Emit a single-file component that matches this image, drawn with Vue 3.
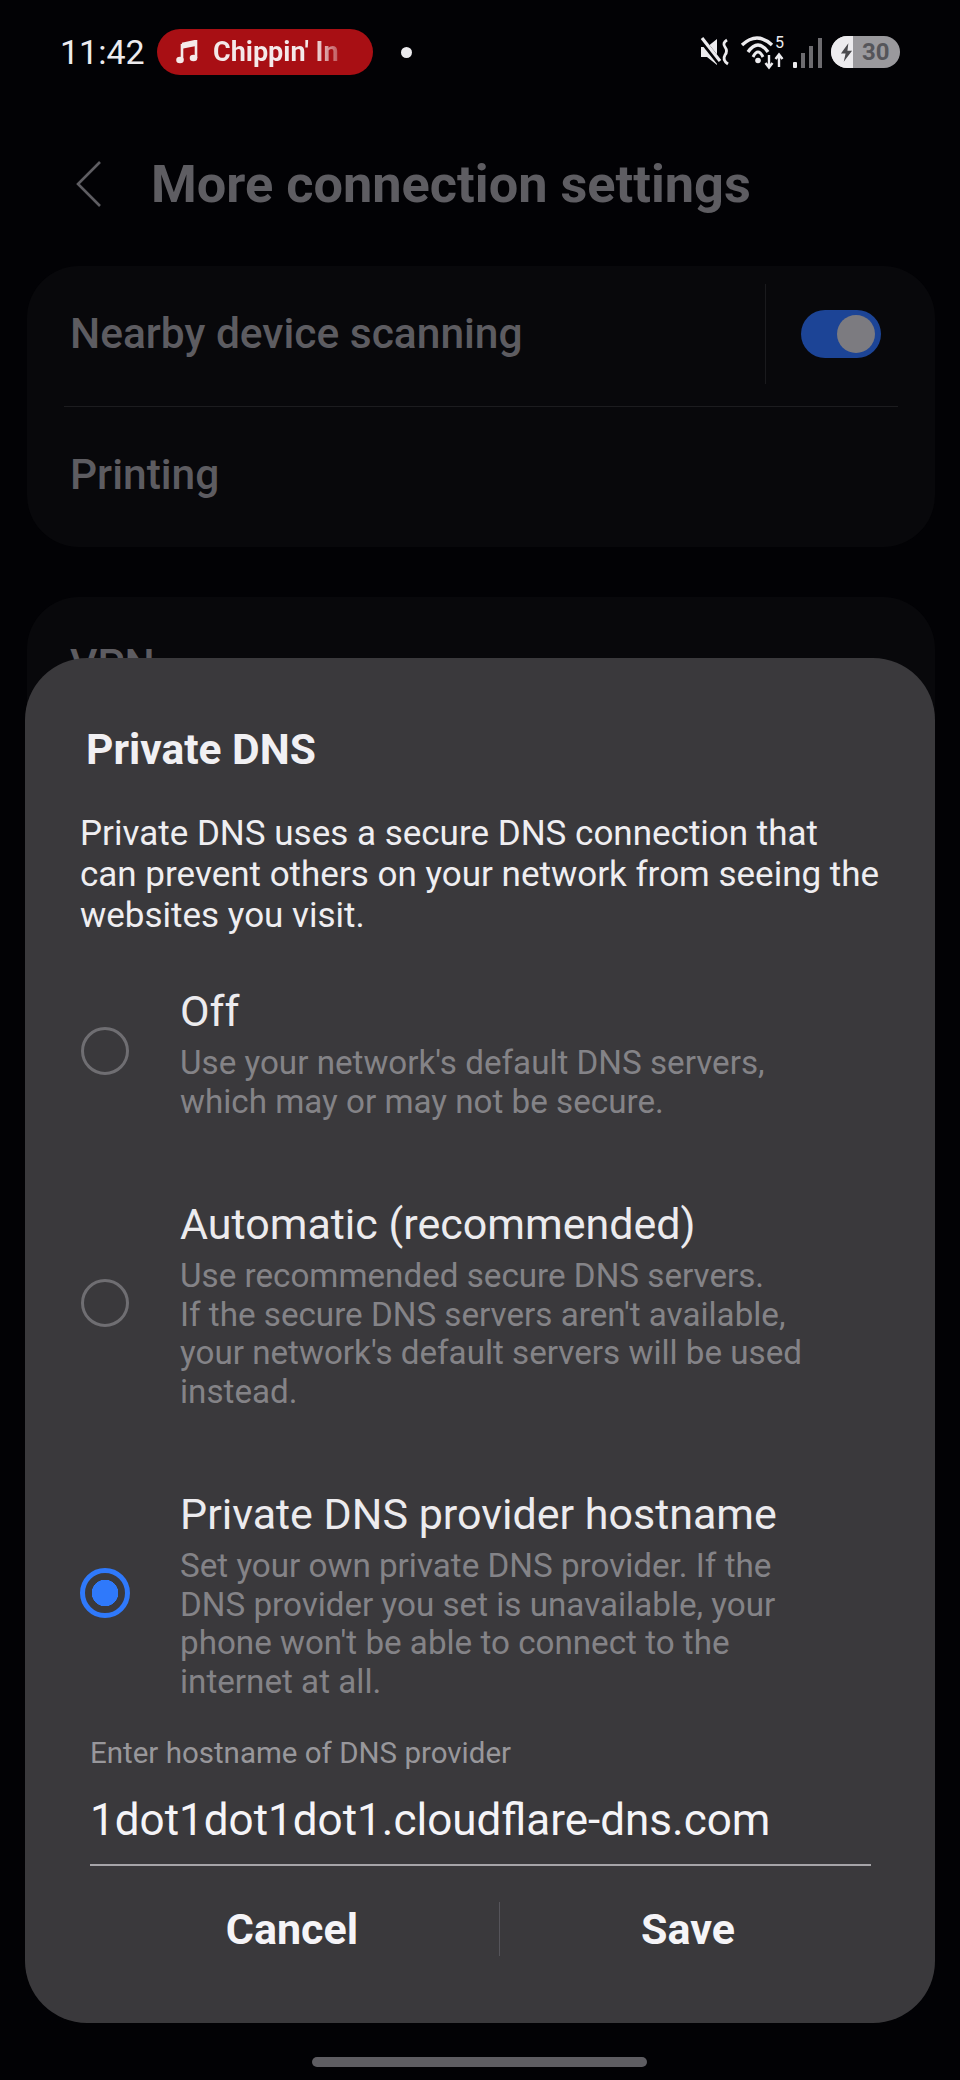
<template>
  <div class="screen">
    <div class="status-bar">
      <span class="time">11:42</span>
      <div class="now-playing">
        <svg class="note" viewBox="0 0 22 24" width="22" height="24">
          <path d="M6 4 L20 1 V18" fill="none" stroke="#f4e9e9" stroke-width="2.6" />
          <path d="M6 4 V20" fill="none" stroke="#f4e9e9" stroke-width="2.6" />
          <path d="M6 3.5 L20 .8 V6 L6 8.8 Z" fill="#f4e9e9" />
          <ellipse cx="4" cy="20" rx="3.8" ry="3.2" fill="#f4e9e9" />
          <ellipse cx="17.5" cy="18" rx="3.8" ry="3.2" fill="#f4e9e9" />
        </svg>
        <span class="track">Chippin' In</span>
      </div>
      <span class="dot"></span>
      <div class="status-icons">
        <svg viewBox="0 0 32 30" width="32" height="30">
          <path d="M1 10 H7 L17 2 V28 L7 20 H1 Z" fill="#ecebee" />
          <path d="M1 2 L20 26" stroke="#020205" stroke-width="6" />
          <path d="M2 1 L20 24" stroke="#ecebee" stroke-width="3.200" />
          <path d="M27 3 Q22 6 25 10 Q28 14 25 18 Q22 23 28 27" fill="none" stroke="#ecebee" stroke-width="2.800" />
        </svg>
        <svg class="wifi" viewBox="0 0 46 34" width="46" height="34">
          <path d="M2 10 Q17 -4 32 10" fill="none" stroke="#ecebee" stroke-width="3.400" />
          <path d="M8 17 Q18 3 28 17" fill="none" stroke="#ecebee" stroke-width="3.400" />
          <path d="M13 22 Q18 12 23 22" fill="none" stroke="#ecebee" stroke-width="3" />
          <circle cx="18" cy="25.500" r="2.800" fill="#ecebee" />
          <text x="35" y="13" class="wifi-num">5</text>
          <path d="M29 20 V32 M25.500 28 L29 32.500 L32.500 28" fill="none" stroke="#ecebee" stroke-width="2.400" />
          <path d="M39 32 V20 M35.500 24 L39 19.500 L42.500 24" fill="none" stroke="#ecebee" stroke-width="2.400" />
        </svg>
        <svg class="signal" viewBox="0 0 29 30" width="29" height="30">
          <rect x="0" y="24" width="4" height="6" rx="1" fill="#ecebee" />
          <rect x="8" y="15" width="4" height="15" fill="#6d6c70" />
          <rect x="16" y="8" width="4" height="22" fill="#6d6c70" />
          <rect x="25" y="0" width="4" height="30" fill="#6d6c70" />
        </svg>
        <div class="battery">
          <div class="battery-fill">
            <svg viewBox="0 0 14 20" width="13" height="19">
              <path d="M9 0 L1 11 H6 L4 20 L13 8 H8 Z" fill="#4a4a4e" />
            </svg>
          </div>
          <span class="battery-num">30</span>
        </div>
      </div>
    </div>

    <div class="app-header">
      <svg viewBox="0 0 26 48" width="26" height="48">
        <path d="M24 2 L2 24 L24 46" fill="none" stroke="#5e5d62" stroke-width="2.600" />
      </svg>
      <h1 class="app-title">More connection settings</h1>
    </div>

    <section class="card">
      <div class="card-row">
        <span class="row-label">Nearby device scanning</span>
        <span class="row-sep"></span>
        <span class="toggle"><span class="thumb"></span></span>
      </div>
      <div class="card-divider"></div>
      <div class="card-row">
        <span class="row-label">Printing</span>
      </div>
    </section>

    <section class="card card-vpn">
      <div class="card-row">
        <span class="row-label">VPN</span>
      </div>
    </section>

    <div class="dialog">
      <h2 class="dialog-title">Private DNS</h2>
      <p class="dialog-desc">
        Private DNS uses a secure DNS connection that<br />
        can prevent others on your network from seeing the<br />
        websites you visit.
      </p>

      <div
        v-for="opt in options"
        :key="opt.title"
        class="option"
      >
        <span class="radio" :class="{ on: opt.on }"></span>
        <div class="option-text">
          <div class="option-title">{{ opt.title }}</div>
          <div v-for="line in opt.lines" :key="line" class="option-sub">{{ line }}</div>
        </div>
      </div>

      <div class="field">
        <div class="field-label">Enter hostname of DNS provider</div>
        <div class="field-value">1dot1dot1dot1.cloudflare-dns.com</div>
      </div>

      <div class="actions">
        <span class="action">Cancel</span>
        <span class="action-sep"></span>
        <span class="action">Save</span>
      </div>
    </div>

    <div class="home-bar"></div>
  </div>
</template>

<script setup>
const options = [
  {
    title: 'Off',
    lines: ["Use your network's default DNS servers,", 'which may or may not be secure.'],
  },
  {
    title: 'Automatic (recommended)',
    lines: [
      'Use recommended secure DNS servers.',
      "If the secure DNS servers aren't available,",
      "your network's default servers will be used",
      'instead.',
    ],
  },
  {
    title: 'Private DNS provider hostname',
    on: true,
    lines: [
      'Set your own private DNS provider. If the',
      'DNS provider you set is unavailable, your',
      "phone won't be able to connect to the",
      'internet at all.',
    ],
  },
]
</script>

<style>
html, body {
  background: #020205;
}
</style>

<style scoped>
.screen {
  position: relative;
  width: 960px;
  height: 2080px;
  overflow: hidden;
  background: #020205;
  font-family: Roboto, "Liberation Sans", sans-serif;
}

.status-bar {
  display: flex;
  align-items: center;
  height: 46px;
  padding: 29px 60px 0 60px;
}

.time {
  font-size: 34px;
  color: #ecebee;
  width: 97px;
}

.now-playing {
  display: flex;
  align-items: center;
  gap: 15px;
  width: 216px;
  height: 46px;
  padding-left: 19px;
  box-sizing: border-box;
  border-radius: 23px;
  background: #a80f14;
}

.track {
  font-size: 27px;
  font-weight: 700;
  color: #f4e9e9;
  white-space: nowrap;
  background: linear-gradient(90deg, #f4e9e9 80%, #c05358 100%);
  -webkit-background-clip: text;
  background-clip: text;
  -webkit-text-fill-color: transparent;
}

.dot {
  width: 11px;
  height: 11px;
  border-radius: 50%;
  background: #ecebee;
  margin-left: 28px;
}

.status-icons {
  display: flex;
  align-items: center;
  margin-left: auto;
}

.wifi {
  margin-left: 8px;
  overflow: visible;
}

.wifi-num {
  font-size: 16px;
  fill: #ecebee;
  font-family: Roboto, sans-serif;
}

.signal {
  margin-left: 7px;
  margin-top: 2px;
}

.battery {
  display: flex;
  align-items: center;
  width: 69px;
  height: 32px;
  margin-left: 9px;
  border-radius: 16px;
  overflow: hidden;
  background: #9a999d;
}

.battery-fill {
  display: flex;
  align-items: center;
  justify-content: flex-end;
  width: 22px;
  height: 32px;
  background: #ecebee;
}

.battery-num {
  font-size: 24px;
  font-weight: 700;
  color: #55555a;
  margin-left: 9px;
}

.app-header {
  display: flex;
  align-items: center;
  gap: 49px;
  padding: 82px 0 0 76px;
}

.app-title {
  margin: 0;
  font-size: 52.300px;
  font-weight: 700;
  color: #5e5d62;
  line-height: 54px;
}

.card {
  margin: 55px 25px 0 27px;
  height: 281px;
  border-radius: 52px;
  background: #08080b;
}

.card-vpn {
  margin-top: 50px;
  height: 400px;
}

.card-row {
  display: flex;
  align-items: center;
  height: 140px;
  box-sizing: border-box;
  padding: 0 0 5px 43px;
}

.row-label {
  font-size: 42.500px;
  font-weight: 500;
  color: #5d5c61;
}

.row-sep {
  width: 1px;
  height: 100px;
  margin-left: auto;
  background: #1a1a1d;
}

.toggle {
  display: flex;
  align-items: center;
  justify-content: flex-end;
  width: 80px;
  height: 48px;
  margin: 0 54px 0 35px;
  padding-right: 6px;
  box-sizing: border-box;
  border-radius: 24px;
  background: #1c4496;
}

.thumb {
  width: 38px;
  height: 38px;
  border-radius: 50%;
  background: #7c7b80;
}

.card-divider {
  height: 1px;
  margin: 0 37px;
  background: #1c1c1f;
}

.dialog {
  position: absolute;
  left: 25px;
  top: 658px;
  width: 910px;
  height: 1365px;
  box-sizing: border-box;
  padding: 66px 40px 0 55px;
  border-radius: 62px;
  background: #3a393c;
}

.dialog-title {
  margin: 0 0 0 6px;
  font-size: 42.500px;
  font-weight: 700;
  line-height: 52px;
  color: #f1f0f3;
}

.dialog-desc {
  margin: 37px 0 0;
  font-size: 35px;
  line-height: 41px;
  color: #efeef1;
}

.option {
  display: flex;
  align-items: center;
  margin-top: 78px;
}

.dialog-desc + .option {
  margin-top: 50px;
}

.radio {
  flex-shrink: 0;
  box-sizing: border-box;
  width: 48px;
  height: 48px;
  margin: 0 1px 5px;
  border: 3px solid #6f6e72;
  border-radius: 50%;
}

.radio.on {
  width: 50px;
  height: 50px;
  margin: 0 0 5px;
  border: 5px solid #2f79fb;
  background: radial-gradient(circle, #2f79fb 13px, transparent 13.500px);
}

.option-text {
  margin-left: 50px;
}

.option-title {
  font-size: 43px;
  line-height: 50px;
  color: #ecebee;
  margin-bottom: 8px;
}

.option-sub {
  font-size: 33.200px;
  line-height: 38.500px;
  color: #848387;
}

.field {
  margin: 34px 0 0 10px;
  width: 781px;
  border-bottom: 2px solid #a6a5a9;
}

.field-label {
  font-size: 29.500px;
  line-height: 36px;
  color: #98979b;
}

.field-value {
  margin-top: 24px;
  padding-bottom: 19px;
  font-size: 44px;
  line-height: 50px;
  color: #f5f4f7;
}

.actions {
  display: grid;
  grid-template-columns: 414px 1px 376px;
  align-items: center;
  height: 56px;
  margin: 35px 0 0 5px;
}

.action {
  text-align: center;
  font-size: 43px;
  font-weight: 700;
  color: #f5f4f7;
}

.action-sep {
  height: 54px;
  background: #55545a;
}

.home-bar {
  position: absolute;
  left: 312px;
  top: 2057px;
  width: 335px;
  height: 10px;
  border-radius: 5px;
  background: #5e5d62;
}
</style>
